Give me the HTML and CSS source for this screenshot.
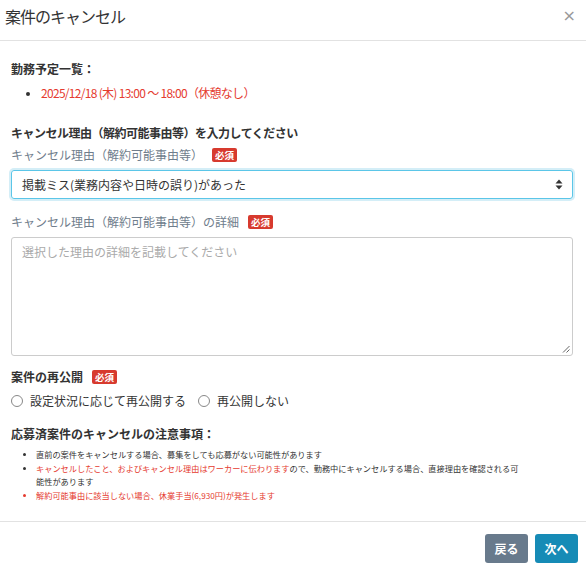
FILE: index.html
```html
<!DOCTYPE html>
<html lang="ja">
<head>
<meta charset="utf-8">
<link rel="stylesheet" href="styles.css">
</head>
<body>
<div class="modal">
  <div class="modal-header">
    <h1 class="title">案件のキャンセル</h1>
    <span class="close">×</span>
  </div>
  <div class="modal-body">
    <div class="heading h-first">勤務予定一覧：</div>
    <ul class="schedule">
      <li>2025/12/18 (木) 13:00 〜 18:00（休憩なし）</li>
    </ul>

    <div class="heading h-reason">キャンセル理由（解約可能事由等）を入力してください</div>
    <div class="label">キャンセル理由（解約可能事由等）<span class="badge">必須</span></div>
    <div class="select">
      <span>掲載ミス(業務内容や日時の誤り)があった</span>
      <svg class="arrows" width="8" height="11" viewBox="0 0 8 11"><path d="M4 0.5 L7.5 4.5 H0.5 Z M4 10.5 L7.5 6.5 H0.5 Z" fill="#333"/></svg>
    </div>
    <div class="label label2">キャンセル理由（解約可能事由等）の詳細<span class="badge">必須</span></div>
    <div class="textarea">
      <span class="placeholder">選択した理由の詳細を記載してください</span>
      <svg class="grip" width="8" height="8" viewBox="0 0 8 8"><path d="M7.5 1 L1 7.5 M7.5 4.5 L4.5 7.5" stroke="#555" stroke-width="0.9"/></svg>
    </div>

    <div class="heading h-repub">案件の再公開<span class="badge">必須</span></div>
    <div class="radios">
      <label class="radio"><span class="circle"></span>設定状況に応じて再公開する</label>
      <label class="radio"><span class="circle"></span>再公開しない</label>
    </div>

    <div class="heading h-notes">応募済案件のキャンセルの注意事項：</div>
    <ul class="notes">
      <li>直前の案件をキャンセルする場合、募集をしても応募がない可能性があります</li>
      <li><span class="red">キャンセルしたこと、およびキャンセル理由はワーカーに伝わります</span>ので、勤務中にキャンセルする場合、直接理由を確認される可能性があります</li>
      <li class="red">解約可能事由に該当しない場合、休業手当(6,930円)が発生します</li>
    </ul>
  </div>
  <div class="modal-footer">
    <button class="btn btn-back">戻る</button>
    <button class="btn btn-next">次へ</button>
  </div>
</div>
</body>
</html>
```
FILE: styles.css
```css
* { box-sizing: border-box; }
html, body { margin: 0; padding: 0; background: #fff; }
body {
  font-family: "Noto Sans CJK JP", "Noto Sans", sans-serif;
  color: #333;
  font-size: 12px;
  width: 586px;
  height: 569px;
  overflow: hidden;
}
.modal { width: 586px; }
.modal-header {
  height: 41px;
  border-bottom: 1px solid #e2e2e2;
  display: flex;
  align-items: flex-start;
  justify-content: space-between;
  padding: 0 9px 0 5px;
}
.title {
  margin: 0;
  font-size: 16px;
  font-weight: 400;
  line-height: 32px;
  color: #333;
  letter-spacing: -1px;
}
.close {
  font-size: 16px;
  line-height: 32px;
  color: #999;
  font-family: "DejaVu Sans", sans-serif;
  margin-right: 1px;
}
.modal-body { padding: 18px 13px 0 11px; }
.heading {
  font-weight: 700;
  font-size: 12px;
  line-height: 20px;
  color: #333;
  display: flex;
  align-items: center;
}
.schedule {
  margin: 4px 0 0;
  padding-left: 30px;
  color: #e53b2f;
  font-size: 12px;
  line-height: 20px;
  letter-spacing: -0.7px;
}
.schedule li::marker { color: #333; font-size: 11px; }
.h-reason { margin-top: 20px; letter-spacing: -0.5px; }
.label {
  margin-top: 3px;
  line-height: 18px;
  color: #6f7d8c;
  display: flex;
  align-items: center;
}
.badge {
  display: inline-block;
  background: #d73a2e;
  color: #fff;
  font-size: 9.5px;
  font-weight: 700;
  line-height: 14px;
  height: 14px;
  padding: 0 3px;
  border-radius: 2px;
  margin-left: 9px;
  letter-spacing: 0;
}
.select {
  margin-top: 6px;
  height: 29px;
  border: 1px solid #5bc6e8;
  border-radius: 3px;
  box-shadow: 0 0 0 2px #d4eef7;
  display: flex;
  align-items: center;
  justify-content: space-between;
  padding: 0 9px 0 10px;
  color: #333;
}
.label2 { margin-top: 14px; }
.textarea {
  margin-top: 6px;
  height: 119px;
  border: 1px solid #ccc;
  border-radius: 3px;
  padding: 5px 10px;
  position: relative;
}
.placeholder { color: #aaa; line-height: 18px; }
.grip { position: absolute; right: 2px; bottom: 2px; }
.h-repub { margin-top: 11px; }
.radios {
  margin-top: 4px;
  display: flex;
  line-height: 20px;
  color: #333;
}
.radio { display: flex; align-items: center; margin-right: 12px; }
.circle {
  width: 12px;
  height: 12px;
  border: 1px solid #888;
  border-radius: 50%;
  margin: 0 7px 0 0;
}
.h-notes { margin-top: 13px; }
.notes {
  margin: 4px 0 0;
  padding-left: 25px;
  font-size: 8.2px;
  line-height: 13.7px;
  color: #333;
  padding-right: 49px;
}
.notes li::marker { font-size: 8px; }
.red { color: #e53b2f; }
.modal-footer {
  margin-top: 18px;
  border-top: 1px solid #e2e2e2;
  padding: 12px 8px 0 0;
  display: flex;
  justify-content: flex-end;
  gap: 7px;
}
.btn {
  border: none;
  border-radius: 3px;
  color: #fff;
  font-family: "Noto Sans CJK JP", sans-serif;
  font-weight: 700;
  font-size: 12px;
  height: 29px;
  width: 43px;
  padding: 0;
}
.btn-back { background: #687a8c; }
.btn-next { background: #168bb6; }
```
